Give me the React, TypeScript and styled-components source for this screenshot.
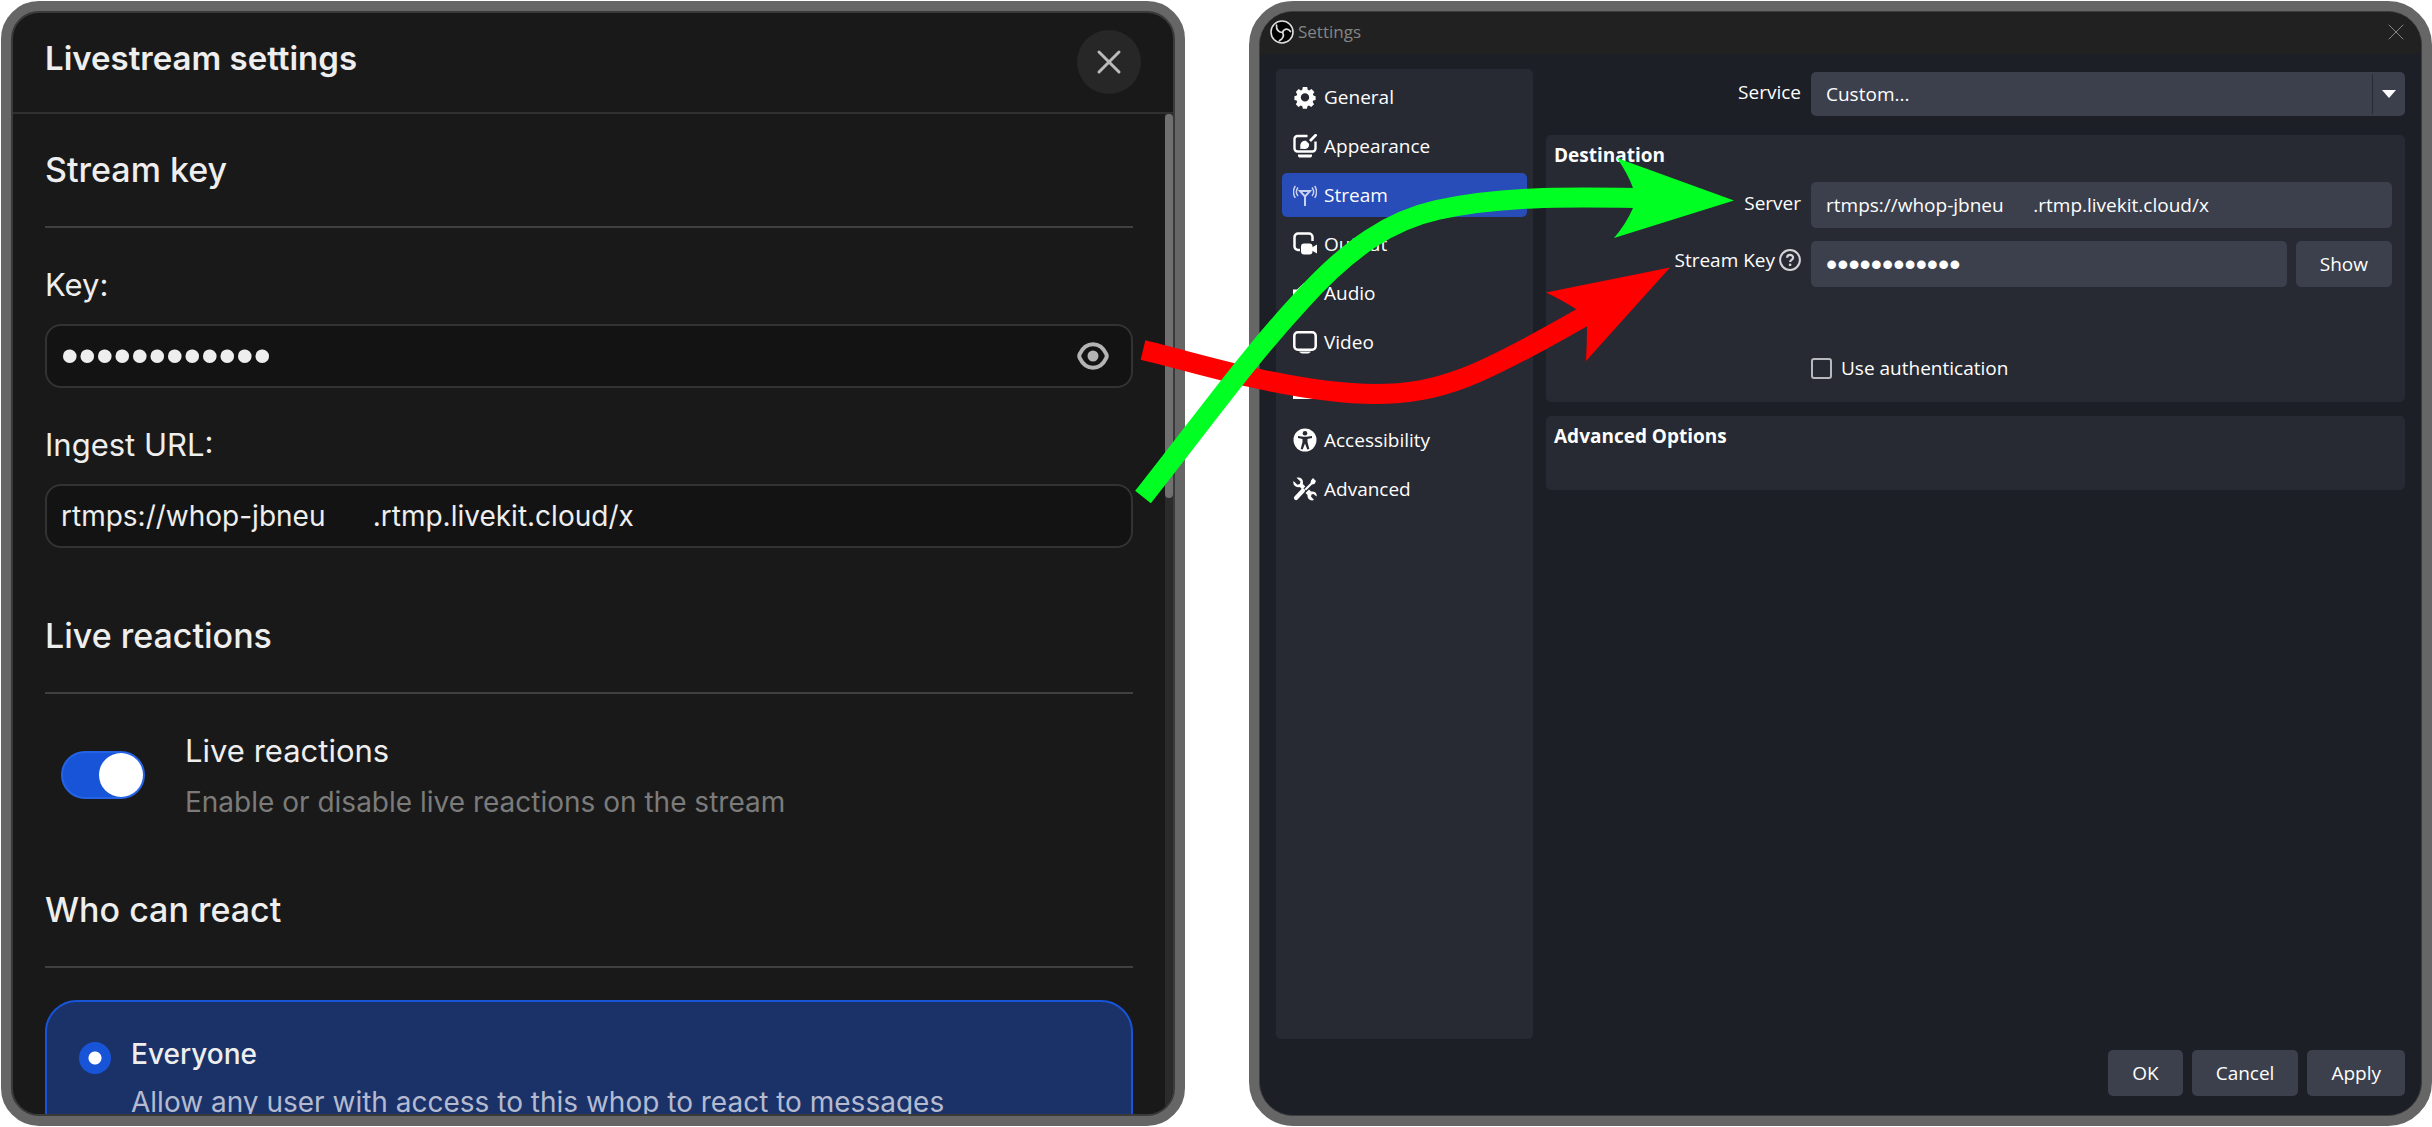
import React, { useState } from "react";
import styled, { createGlobalStyle, css } from "styled-components";

const GlobalStyle = createGlobalStyle`
  *, *::before, *::after { box-sizing: border-box; }
  html, body { margin: 0; background: #fff; }
  button, input, select { font: inherit; color: inherit; margin: 0; }
  h1, h2, h3, p, ul { margin: 0; padding: 0; }
`;

/* ---------- page ---------- */

const Page = styled.main`
  position: relative;
  display: grid;
  grid-template-columns: minmax(0, 1184fr) minmax(0, 1183fr);
  grid-template-rows: minmax(0, 1fr);
  gap: 64px;
  height: 100vh;
  padding: 1px 0 1px 1px;
`;

const Arrows = styled.svg`
  position: absolute;
  inset: 0;
  width: 100%;
  height: 100%;
  pointer-events: none;
`;

/* ---------- livestream panel ---------- */

const LiveFrame = styled.section`
  display: flex;
  border: 10px solid #666;
  border-radius: 38px;
  background: #666;
  font-family: Inter, "Liberation Sans", sans-serif;
  color: #eee;
`;

const LivePanel = styled.div`
  flex: 1;
  min-width: 0;
  display: flex;
  flex-direction: column;
  overflow: hidden;
  border: 2px solid #3a3a3a;
  border-radius: 28px;
  background: #191919;
`;

const LiveHeader = styled.header`
  display: flex;
  justify-content: space-between;
  align-items: flex-start;
  padding: 17px 32px 18px;
  border-bottom: 2px solid #303030;
`;

const LiveTitle = styled.h1`
  padding-top: 8px;
  font-size: 33px;
  line-height: 40px;
  font-weight: 600;
`;

const CloseButton = styled.button`
  display: grid;
  place-items: center;
  width: 64px;
  height: 64px;
  padding: 0;
  border: 0;
  border-radius: 50%;
  background: #272727;
  color: #bbb;
`;

const LiveBody = styled.div`
  flex: 1;
  min-height: 0;
  display: grid;
  grid-template-columns: minmax(0, 1fr) 8px;
  overflow: hidden;
`;

const LiveContent = styled.div`
  min-height: 0;
  overflow: hidden;
  padding: 32px 32px 0;
`;

const ScrollTrack = styled.div`
  background: #2b2b2b;
`;

const ScrollThumb = styled.div`
  height: 384px;
  border-radius: 4px;
  background: #707070;
`;

const SectionTitle = styled.h2`
  padding-bottom: 32px;
  border-bottom: 2px solid #404040;
  font-size: 34px;
  line-height: 48px;
  font-weight: 500;
`;

const KeyFields = styled.div`
  display: grid;
  gap: 37px;
  padding: 37px 0 64px;
`;

const FieldGroup = styled.div`
  display: grid;
  gap: 19px;
`;

const FieldLabel = styled.label`
  font-size: 31px;
  line-height: 40px;
`;

const FieldBox = styled.div`
  display: flex;
  align-items: center;
  height: 64px;
  padding: 0 22px 0 14px;
  border: 2px solid #333;
  border-radius: 16px;
  background: #131313;
`;

const FieldInput = styled.input`
  flex: 1;
  min-width: 0;
  padding: 0;
  border: 0;
  outline: 0;
  background: none;
  font-size: 28px;
  line-height: 40px;
  white-space: pre;
`;

const SecretInput = styled(FieldInput)`
  height: 60px;
  font-family: "Liberation Sans", sans-serif;
  font-size: 50px;
`;

const IconButton = styled.button`
  display: grid;
  place-items: center;
  padding: 0;
  border: 0;
  background: none;
  color: #b4b4b4;
`;

const ToggleRow = styled.label`
  display: grid;
  grid-template-columns: 84px 1fr;
  align-items: start;
  gap: 40px;
  padding: 37px 16px 64px;
`;

const Toggle = styled.input`
  appearance: none;
  display: flex;
  justify-content: flex-start;
  width: 84px;
  height: 48px;
  padding: 0;
  margin-top: 20px;
  border: 2px solid #2563e6;
  border-radius: 24px;
  background: #1754d8;

  &::before {
    content: "";
    width: 44px;
    height: 44px;
    border-radius: 50%;
    background: #fff;
  }
  &:checked { justify-content: flex-end; }
`;

const OptionText = styled.span`
  display: grid;
  gap: 11px;
`;

const ToggleName = styled.span`
  font-size: 31px;
  line-height: 40px;
`;

const Hint = styled.span<{ $onCard?: boolean }>`
  font-size: 28px;
  line-height: 40px;
  color: ${(p) => (p.$onCard ? "#b4bbd0" : "#7b7b7b")};
`;

const OptionCard = styled.label`
  display: grid;
  grid-template-columns: 32px 1fr;
  gap: 20px;
  margin-top: 32px;
  padding: 32px 32px 48px;
  border: 2px solid #1754d8;
  border-radius: 32px;
  background: #1b3269;
`;

const OptionName = styled.span`
  font-size: 28px;
  line-height: 40px;
  font-weight: 500;
`;

const CardText = styled(OptionText)`
  gap: 8px;
`;

const Radio = styled.input`
  appearance: none;
  width: 32px;
  height: 32px;
  margin: 8px 0 0;
  border-radius: 50%;
  background: radial-gradient(circle, #fff 0 6px, #1754d8 7px);
`;

/* ---------- OBS window ---------- */

const ObsFrame = styled.section`
  display: flex;
  border: 10px solid #666;
  border-radius: 44px;
  background: #666;
  font-family: "Open Sans", "Noto Sans", sans-serif;
  font-size: 19px;
  line-height: 26px;
  color: #fefefe;
`;

const ObsWindow = styled.div`
  flex: 1;
  min-width: 0;
  display: flex;
  flex-direction: column;
  overflow: hidden;
  border: 1px solid #3c3c3e;
  border-radius: 34px;
  background: #1d1f26;
`;

const TitleBar = styled.header`
  display: flex;
  align-items: center;
  gap: 4px;
  height: 42px;
  padding: 0 17px 2px 10px;
  background: #212121;
  color: #858585;
`;

const TitleText = styled.h1`
  flex: 1;
  font-size: 17px;
  line-height: 20px;
  font-weight: 400;
`;

const ObsBody = styled.div`
  flex: 1;
  min-height: 0;
  display: grid;
  grid-template-columns: 257px minmax(0, 1fr);
  gap: 13px;
  padding: 15px 16px 11px;
`;

const Sidebar = styled.nav`
  padding: 6px;
  border-radius: 5px;
  background: #272a33;
`;

const NavList = styled.ul`
  display: grid;
  gap: 5px;
  list-style: none;
`;

const NavLink = styled.a<{ $active: boolean }>`
  display: flex;
  align-items: center;
  gap: 7px;
  height: 44px;
  padding: 0 11px;
  border-radius: 5px;
  text-decoration: none;
  color: inherit;
  ${(p) => p.$active && css`background: #284cb8;`}
`;

const Settings = styled.div`
  display: flex;
  flex-direction: column;
`;

const formGrid = css`
  display: grid;
  grid-template-columns: 255px minmax(0, 1fr);
  column-gap: 10px;
`;

const ServiceRow = styled.div`
  ${formGrid}
  margin: 3px 0 19px;
`;

const RowLabel = styled.label<{ $raised?: boolean }>`
  display: flex;
  justify-content: flex-end;
  align-items: center;
  gap: 4px;
  padding-bottom: ${(p) => (p.$raised ? 8 : 4)}px;
`;

const SelectBox = styled.div`
  display: grid;
  grid-template-columns: minmax(0, 1fr) 33px;
  align-items: stretch;
  height: 44px;
  border-radius: 5px;
  background: #3c404d;
`;

const Select = styled.select`
  grid-area: 1 / 1 / 2 / 3;
  appearance: none;
  padding: 0 15px;
  border: 0;
  background: none;
`;

const SelectArrow = styled.span`
  grid-area: 1 / 2;
  display: grid;
  place-items: center;
  margin: 2px 0;
  border-left: 1px solid #272a33;
  pointer-events: none;
`;

const Group = styled.section`
  padding: 7px 13px 21px 8px;
  border-radius: 5px;
  background: #272a33;

  & + & { margin-top: 14px; padding-bottom: 41px; }
`;

const GroupTitle = styled.h2`
  font-size: 19px;
  line-height: 26px;
  font-weight: 700;
`;

const GroupForm = styled.div`
  ${formGrid}
  grid-template-columns: 247px minmax(0, 1fr);
  row-gap: 13px;
  padding-top: 14px;
`;

const InputRow = styled.div`
  display: flex;
  gap: 9px;
`;

const ObsInput = styled.input`
  flex: 1;
  min-width: 0;
  height: 46px;
  padding: 0 15px;
  border: 0;
  border-radius: 5px;
  outline: 0;
  background: #3c404d;
  white-space: pre;
`;

const ObsSecret = styled(ObsInput)`
  font-family: "Liberation Sans", sans-serif;
  font-size: 32px;
`;

const ObsButton = styled.button`
  height: 46px;
  padding: 0 24px;
  border: 0;
  border-radius: 5px;
  background: #3c404d;
`;

const CheckRow = styled.label`
  grid-column: 2;
  display: flex;
  align-items: center;
  gap: 9px;
  padding-top: 55px;
`;

const Checkbox = styled.input`
  appearance: none;
  width: 21px;
  height: 21px;
  border: 2px solid #b8b9bd;
  border-radius: 3px;
`;

const Footer = styled.footer`
  display: flex;
  justify-content: flex-end;
  gap: 9px;
  padding: 0 16px 19px;
`;

const PlainButton = styled.button`
  display: grid;
  place-items: center;
  padding: 0;
  border: 0;
  background: none;
  color: inherit;
`;

/* ---------- icons ---------- */

const icon = { width: 24, height: 24, viewBox: "0 0 24 24", fill: "none", "aria-hidden": true } as const;

const ObsLogo = () => (
  <svg {...icon}>
    <circle cx="12" cy="12" r="11" fill="#000" stroke="#ddd" strokeWidth="1.6" />
    <g fill="none" stroke="#ddd" strokeWidth="1.7" strokeLinecap="round">
      <path d="M12.500 12.500C9 12.500 6 10 6.500 5" />
      <path d="M12.500 12.500C14 8.500 18 8 20.500 11.500" />
      <path d="M12.500 12.500C14.500 15.500 13 19 9.500 20.500" />
    </g>
  </svg>
);

const GearIcon = () => (
  <svg {...icon}>
    <path
      fill="currentColor"
      fillRule="evenodd"
      d="M9.800 2h4.400l.5 2.700 1.400.7 2.400-1.500 2.900 3-1.500 2.400.5 1.300 2.200.6v3.800l-2.300.6-.6 1.300 1.400 2.300-2.900 2.900-2.300-1.500-1.400.6-.6 2.500H9.900l-.6-2.500-1.400-.6-2.400 1.500-2.700-2.900L4.200 17l-.6-1.400-2.200-.6v-3.800l2.300-.7.5-1.300-1.400-2.300 2.800-3L8 5.400l1.300-.7zM12 8.200a4.200 4.200 0 1 0 0 8.400a4.200 4.200 0 1 0 0-8.400z"
    />
  </svg>
);

const AppearanceIcon = () => (
  <svg {...icon}>
    <path d="M14.500 2H4.500A3 3 0 0 0 1.500 5v9.500a3 3 0 0 0 3 3h15a3 3 0 0 0 3-3V7.500" stroke="currentColor" strokeWidth="2.400" />
    <path d="M23.500.3L17 7" stroke="currentColor" strokeWidth="2.800" />
    <path d="M7 14.800c.8-1 0-2.300.3-4C8 7.500 10.500 6.200 13 6.800l3 3c.6 2.500-1 5-4 5.200z" fill="currentColor" />
    <path d="M5 20.500h14v1c0 1.500-1 2-2 2H7c-1 0-2-.5-2-2z" fill="currentColor" />
  </svg>
);

const StreamIcon = () => (
  <svg {...icon} stroke="#c9d2ef" strokeWidth="1.500">
    <path d="M12 23V13M7 8h10L12 13.500z" strokeWidth="2" />
    <path d="M5 4.500c-2 2.500-2 6 0 8.500M2.300 2.800c-2.500 4-2.500 8 0 12M19 4.500c2 2.500 2 6 0 8.500M21.700 2.800c2.500 4 2.500 8 0 12" />
  </svg>
);

const OutputIcon = () => (
  <svg {...icon}>
    <path d="M7 18H5a3.500 3.500 0 0 1-3.500-3.500V5A3.500 3.500 0 0 1 5 1.500h11A3.500 3.500 0 0 1 19.500 5v4" stroke="currentColor" strokeWidth="2.500" />
    <rect x="8" y="11.500" width="11.500" height="11" rx="3" fill="currentColor" />
    <path d="M18 16l6-3.500v9L18 18z" fill="currentColor" />
  </svg>
);

const AudioIcon = () => (
  <svg {...icon}>
    <path d="M0 8.500h4L11 2v20l-7-6.500H0z" fill="currentColor" />
    <path d="M15 7.500c2.500 2.500 2.500 6.500 0 9M18 4c4.500 4.500 4.500 11.500 0 16" stroke="currentColor" strokeWidth="2.400" />
  </svg>
);

const VideoIcon = () => (
  <svg {...icon}>
    <rect x="1.300" y="2.300" width="21.400" height="17.400" rx="3.500" stroke="currentColor" strokeWidth="2.500" />
    <path d="M6 21.500h12c-1 1.500-2.500 2-4 2h-4c-1.500 0-3-.5-4-2z" fill="currentColor" />
  </svg>
);

const HotkeysIcon = () => (
  <svg {...icon}>
    <path
      fill="currentColor"
      fillRule="evenodd"
      d="M2 4h20a2 2 0 0 1 2 2v12a2 2 0 0 1-2 2H0V6a2 2 0 0 1 2-2zm2 4v2h2V8zm5 0v2h2V8zm5 0v2h2V8zM6 14v2h12v-2z"
    />
  </svg>
);

const AccessibilityIcon = () => (
  <svg {...icon}>
    <circle cx="12" cy="12" r="11.500" fill="currentColor" />
    <g fill="#272a33">
      <circle cx="12" cy="5.200" r="2.300" />
      <path d="M5 8l5.500.7h3L19 8v2l-4.500 1v3l1.800 7-2 .5L12 15.500 9.700 21.500l-2-.5 1.800-7v-3L5 10z" />
    </g>
  </svg>
);

const ToolsIcon = () => (
  <svg {...icon}>
    <path d="M20 1l3 3-1.500 3-2.500.5-6 6-1.500-1.500 6-6L18 3.500z" fill="currentColor" />
    <path d="M10 13.500L3 21" stroke="currentColor" strokeWidth="4.200" strokeLinecap="round" />
    <path d="M3.500.8L7.500 4.500 6.800 7l-2.500.8L.5 4C-.5 8 2.500 11 6.800 10l2.500 2.500 3-3L9.800 7C11 2.500 7.500-.5 3.500.8z" fill="currentColor" />
    <path d="M23.500 19.500l-3-2.500-2 .5-.5 2 3 3.500c-4 1.500-7-1.500-6.500-5l-2-2 3.500-3.500 2 2c4-.5 6.500 2 5.500 5z" fill="currentColor" />
  </svg>
);

const HelpIcon = () => (
  <svg {...icon} width={22} height={22}>
    <circle cx="12" cy="12" r="10.800" stroke="#d5d5d8" strokeWidth="2.200" />
    <path d="M8.800 9.500c0-4.200 6.600-4 6.600-.2 0 2.500-3.300 2.400-3.300 5" stroke="#d5d5d8" strokeWidth="2.400" />
    <circle cx="12.100" cy="17.300" r="1.500" fill="#d5d5d8" />
  </svg>
);

const EyeIcon = () => (
  <svg width="32" height="28" viewBox="0 0 32 28" fill="none" aria-hidden="true">
    <path d="M16 2.200c6 0 10.500 4 13.200 9.600a5 5 0 0 1 0 4.400C26.500 21.800 22 25.800 16 25.800S5.500 21.800 2.800 16.200a5 5 0 0 1 0-4.400C5.500 6.200 10 2.200 16 2.200z" stroke="currentColor" strokeWidth="4" />
    <circle cx="16" cy="14" r="5.500" fill="currentColor" />
  </svg>
);

const Cross = ({ size, stroke }: { size: number; stroke: number }) => (
  <svg width={size} height={size} viewBox={`0 0 ${size} ${size}`} aria-hidden="true">
    <path
      d={`M${stroke} ${stroke}L${size - stroke} ${size - stroke}M${size - stroke} ${stroke}L${stroke} ${size - stroke}`}
      stroke="currentColor"
      strokeWidth={stroke}
      strokeLinecap="round"
    />
  </svg>
);

const navItems = [
  { name: "General", Icon: GearIcon },
  { name: "Appearance", Icon: AppearanceIcon },
  { name: "Stream", Icon: StreamIcon },
  { name: "Output", Icon: OutputIcon },
  { name: "Audio", Icon: AudioIcon },
  { name: "Video", Icon: VideoIcon },
  { name: "Hotkeys", Icon: HotkeysIcon },
  { name: "Accessibility", Icon: AccessibilityIcon },
  { name: "Advanced", Icon: ToolsIcon },
];

function LivestreamSettings() {
  const [reactions, setReactions] = useState(true);
  return (
    <LiveFrame>
      <LivePanel>
        <LiveHeader>
          <LiveTitle>Livestream settings</LiveTitle>
          <CloseButton type="button" aria-label="Close">
            <Cross size={26} stroke={3} />
          </CloseButton>
        </LiveHeader>
        <LiveBody>
          <LiveContent>
            <SectionTitle>Stream key</SectionTitle>
            <KeyFields>
              <FieldGroup>
                <FieldLabel htmlFor="live-key">Key:</FieldLabel>
                <FieldBox>
                  <SecretInput id="live-key" type="password" defaultValue="abcdefghijkl" />
                  <IconButton type="button" aria-label="Reveal key">
                    <EyeIcon />
                  </IconButton>
                </FieldBox>
              </FieldGroup>
              <FieldGroup>
                <FieldLabel htmlFor="live-url">Ingest URL:</FieldLabel>
                <FieldBox>
                  <FieldInput id="live-url" defaultValue="rtmps://whop-jbneu      .rtmp.livekit.cloud/x" />
                </FieldBox>
              </FieldGroup>
            </KeyFields>
            <SectionTitle>Live reactions</SectionTitle>
            <ToggleRow>
              <Toggle
                type="checkbox"
                role="switch"
                checked={reactions}
                onChange={(e) => setReactions(e.target.checked)}
              />
              <OptionText>
                <ToggleName>Live reactions</ToggleName>
                <Hint>Enable or disable live reactions on the stream</Hint>
              </OptionText>
            </ToggleRow>
            <SectionTitle>Who can react</SectionTitle>
            <OptionCard>
              <Radio type="radio" name="who" defaultChecked />
              <CardText>
                <OptionName>Everyone</OptionName>
                <Hint $onCard>Allow any user with access to this whop to react to messages</Hint>
              </CardText>
            </OptionCard>
          </LiveContent>
          <ScrollTrack>
            <ScrollThumb />
          </ScrollTrack>
        </LiveBody>
      </LivePanel>
    </LiveFrame>
  );
}

function ObsSettings() {
  return (
    <ObsFrame>
      <ObsWindow>
        <TitleBar>
          <ObsLogo />
          <TitleText>Settings</TitleText>
          <PlainButton type="button" aria-label="Close settings">
            <Cross size={16} stroke={1} />
          </PlainButton>
        </TitleBar>
        <ObsBody>
          <Sidebar>
            <NavList>
              {navItems.map(({ name, Icon }) => (
                <li key={name}>
                  <NavLink href="#" $active={name === "Stream"}>
                    <Icon />
                    {name}
                  </NavLink>
                </li>
              ))}
            </NavList>
          </Sidebar>
          <Settings>
            <ServiceRow>
              <RowLabel htmlFor="service">Service</RowLabel>
              <SelectBox>
                <Select id="service">
                  <option>Custom...</option>
                </Select>
                <SelectArrow>
                  <svg width="14" height="8" viewBox="0 0 14 8" aria-hidden="true">
                    <path d="M0 0h14L7 8z" fill="#fff" />
                  </svg>
                </SelectArrow>
              </SelectBox>
            </ServiceRow>
            <Group>
              <GroupTitle>Destination</GroupTitle>
              <GroupForm>
                <RowLabel htmlFor="server">Server</RowLabel>
                <InputRow>
                  <ObsInput id="server" defaultValue="rtmps://whop-jbneu      .rtmp.livekit.cloud/x" />
                </InputRow>
                <RowLabel htmlFor="obs-key" $raised>
                  Stream Key
                  <HelpIcon />
                </RowLabel>
                <InputRow>
                  <ObsSecret id="obs-key" type="password" defaultValue="abcdefghijkl" />
                  <ObsButton type="button">Show</ObsButton>
                </InputRow>
                <CheckRow>
                  <Checkbox type="checkbox" />
                  Use authentication
                </CheckRow>
              </GroupForm>
            </Group>
            <Group>
              <GroupTitle>Advanced Options</GroupTitle>
            </Group>
          </Settings>
        </ObsBody>
        <Footer>
          <ObsButton type="button">OK</ObsButton>
          <ObsButton type="button">Cancel</ObsButton>
          <ObsButton type="button">Apply</ObsButton>
        </Footer>
      </ObsWindow>
    </ObsFrame>
  );
}

export default function App() {
  return (
    <>
      <GlobalStyle />
      <Page>
        <LivestreamSettings />
        <ObsSettings />
        <Arrows viewBox="0 0 2432 1127" preserveAspectRatio="none" aria-hidden="true">
          <path d="M1143 350C1180 359 1220 371 1259 379C1310 390 1345 394 1375 394C1440 394 1480 376 1583 317" fill="none" stroke="#f00" strokeWidth="20" />
          <path d="M1670 267.500L1546 292.500Q1560 299 1576 309L1587 327Q1587 344 1586 361z" fill="#f00" />
          <path d="M1143 497C1210 412 1245 362 1300 302C1350 246 1392 220 1437 210C1500 196 1565 197 1636 198" fill="none" stroke="#00ff22" strokeWidth="20" />
          <path d="M1734 200.500L1617 158Q1628 174 1633 188V208Q1626 224 1614 238z" fill="#00ff22" />
        </Arrows>
      </Page>
    </>
  );
}
